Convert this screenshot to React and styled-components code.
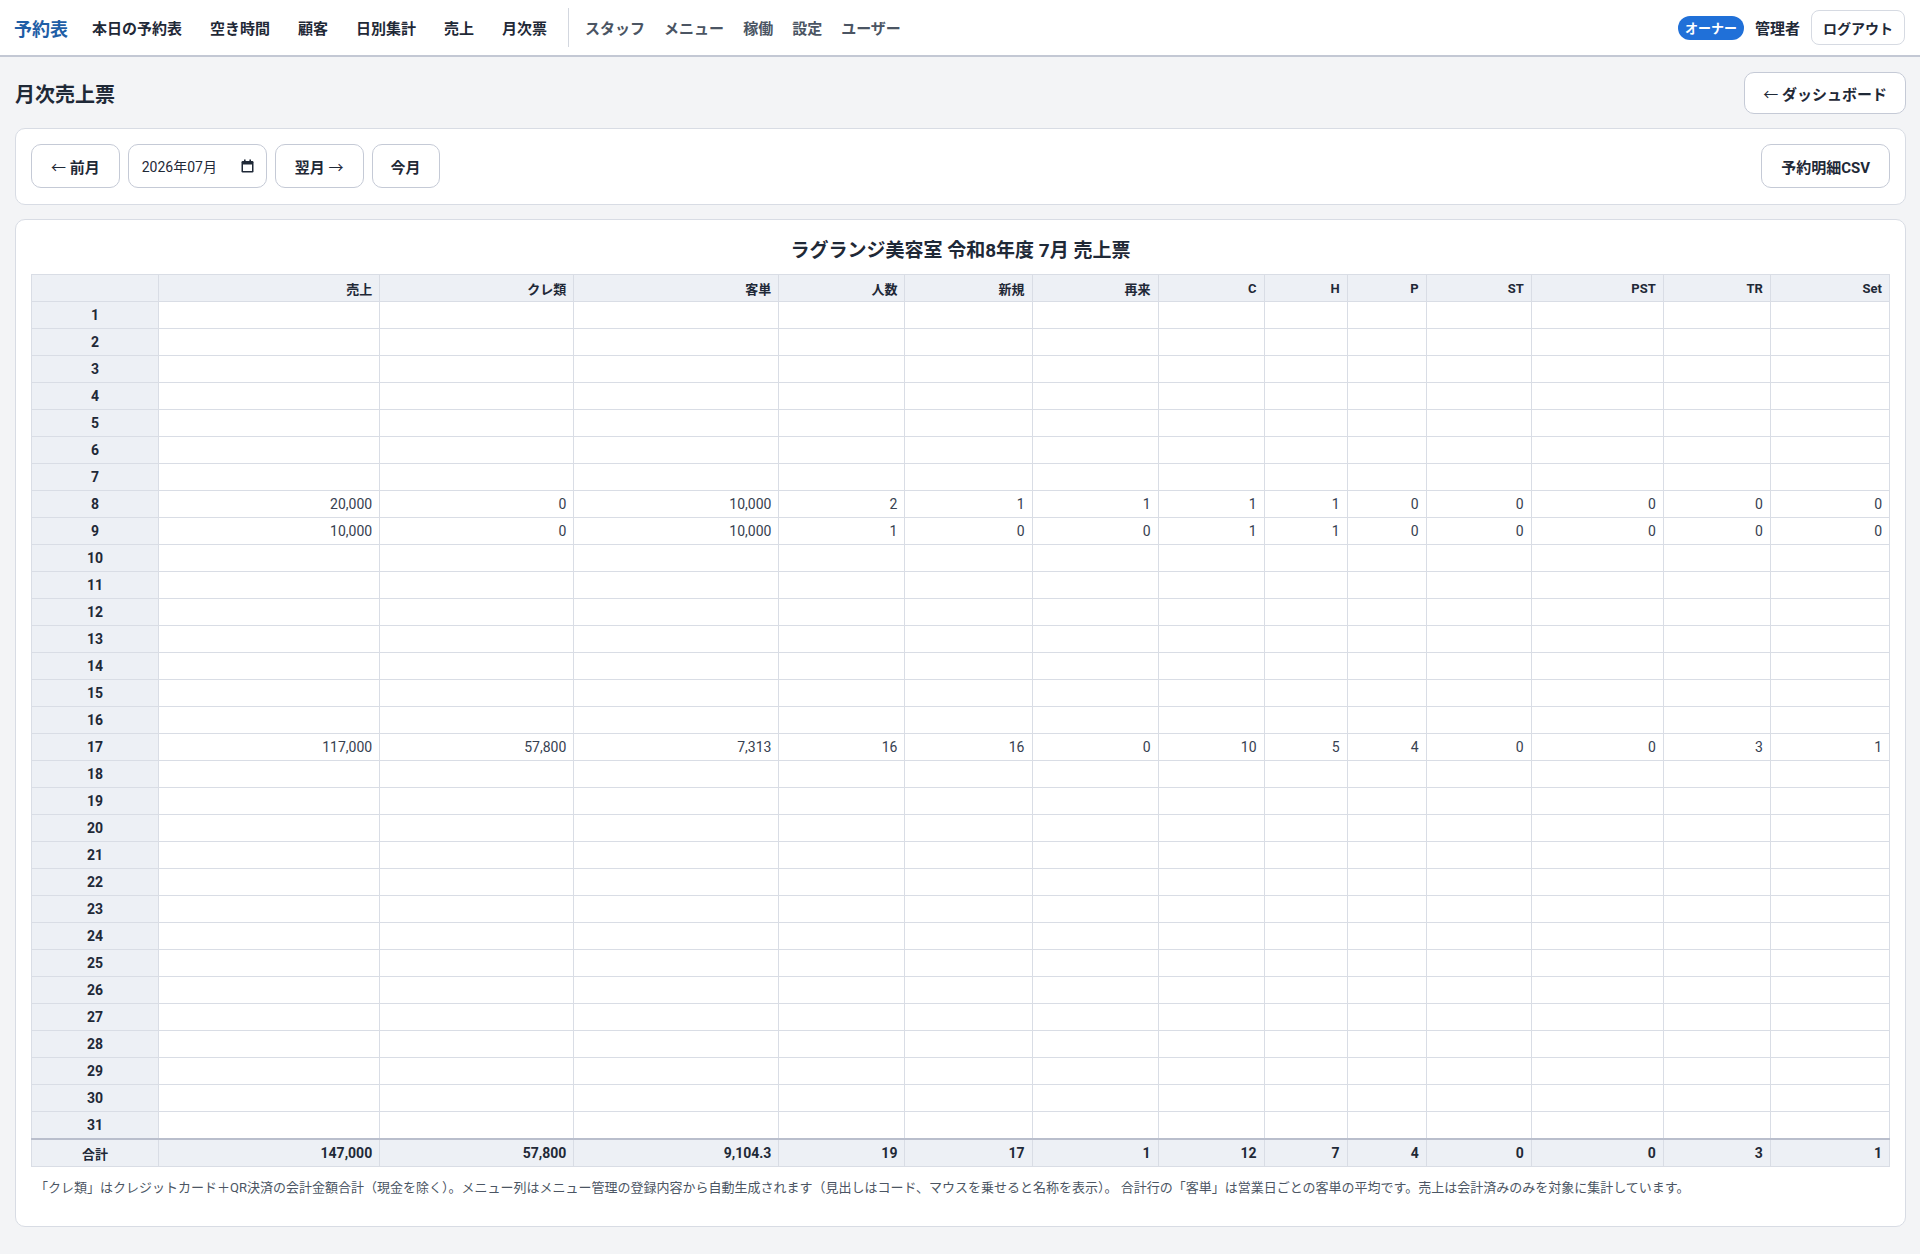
import React from 'react';
import styled, { createGlobalStyle } from 'styled-components';

const GlobalStyle = createGlobalStyle`
  body {
    margin: 0;
    background: #f3f4f6;
    font-family: Roboto, "Noto Sans CJK JP", sans-serif;
    color: #1f2937;
  }
`;

const Nav = styled.nav`
  height: 55px;
  display: flex;
  align-items: center;
  padding: 0 15px 0 14px;
  background: #fff;
  border-bottom: 2px solid #c3c8d4;
`;

const Brand = styled.a`
  font-size: 18px;
  font-weight: 700;
  color: #1f5ea6;
  margin-right: 24px;
  text-decoration: none;
`;

const NavGroup = styled.div`
  display: flex;
  align-items: center;
  gap: ${(p) => p.$gap}px;
`;

const NavLink = styled.a`
  font-size: 15px;
  font-weight: 700;
  color: ${(p) => (p.$muted ? '#4b5563' : '#1f2937')};
  text-decoration: none;
  white-space: nowrap;
`;

const NavDivider = styled.span`
  width: 1px;
  height: 39px;
  background: #d3d7df;
  margin: 0 16px 0 21px;
`;

const NavRight = styled.div`
  margin-left: auto;
  display: flex;
  align-items: center;
  gap: 11px;
`;

const RoleBadge = styled.span`
  height: 24px;
  padding: 0 7px;
  display: inline-flex;
  align-items: center;
  border-radius: 12px;
  background: #2070d8;
  color: #fff;
  font-size: 13px;
  font-weight: 700;
`;

const UserName = styled.span`
  font-size: 15px;
  font-weight: 700;
  color: #1f2937;
`;

const Button = styled.button`
  height: ${(p) => p.$h || 44}px;
  padding: 0 ${(p) => p.$px || 18}px;
  background: #fff;
  border: 1px solid ${(p) => (p.$soft ? '#d6dae2' : '#c5cad6')};
  border-radius: ${(p) => p.$r || 10}px;
  font-family: inherit;
  font-size: ${(p) => p.$fs || 15}px;
  font-weight: 700;
  color: #1f2937;
  cursor: pointer;
  white-space: nowrap;
`;

const Arrow = styled.span`
  font-family: "Noto Sans CJK JP", sans-serif;
  font-weight: 400;
`;

const Page = styled.main`
  padding: 15px 14px 28px 15px;
  display: flex;
  flex-direction: column;
  gap: 14px;
`;

const HeaderRow = styled.div`
  display: flex;
  align-items: center;
  justify-content: space-between;
`;

const PageTitle = styled.h1`
  margin: 0;
  font-size: 20px;
  font-weight: 700;
  color: #1f2937;
`;

const Card = styled.section`
  background: #fff;
  border: 1px solid #d8dce4;
  border-radius: 10px;
  padding: ${(p) => p.$pad};
`;

const Toolbar = styled(Card)`
  display: flex;
  align-items: center;
  gap: 8px;
`;

const DateField = styled.label`
  height: 44px;
  width: 139px;
  box-sizing: border-box;
  padding: 0 12px 0 13px;
  display: flex;
  align-items: center;
  justify-content: space-between;
  border: 1px solid #c5cad6;
  border-radius: 10px;
  font-size: 14px;
  color: #1f2937;
  background: #fff;
`;

const Spacer = styled.div`
  flex: 1;
`;

const SheetTitle = styled.h2`
  margin: 2px 0 9px;
  line-height: 28px;
  text-align: center;
  font-size: 19px;
  font-weight: 700;
  color: #1f2937;
`;

const Table = styled.table`
  width: 100%;
  table-layout: fixed;
  border-collapse: collapse;
  border: 1px solid #d9dde5;
`;

const HeadCell = styled.th`
  height: 26px;
  padding: 0 7px;
  background: #edf0f5;
  border: 1px solid #d9dde5;
  text-align: right;
  font-size: 13px;
  font-weight: 700;
  color: #1f2937;
`;

const DayCell = styled.th`
  height: 26px;
  padding: 0;
  background: #edf0f5;
  border: 1px solid #d9dde5;
  text-align: center;
  font-size: ${(p) => (p.$total ? 13 : 14)}px;
  font-weight: 700;
  color: #1f2937;
`;

const Cell = styled.td`
  height: 26px;
  padding: 0 7px;
  border: 1px solid #d9dde5;
  text-align: right;
  font-size: 14px;
  font-weight: ${(p) => (p.$total ? 700 : 400)};
  color: ${(p) => (p.$total ? '#1f2937' : '#374151')};
  background: ${(p) => (p.$total ? '#edf0f5' : '#fff')};
`;

const TotalRow = styled.tr`
  & > th,
  & > td {
    border-top: 2px solid #b9becc;
  }
`;

const Note = styled.p`
  margin: 0;
  padding: 10px 4px 30px;
  font-size: 13px;
  color: #4b5563;
`;

const CalendarIcon = () => (
  <svg width="13" height="14" viewBox="0 0 13 14">
    <rect x="0.5" y="2" width="12" height="11.5" rx="1.2" fill="#1f2937" />
    <rect x="2" y="5.5" width="9" height="6.5" fill="#fff" />
    <rect x="3" y="0.5" width="1.6" height="2.5" fill="#1f2937" />
    <rect x="8.4" y="0.5" width="1.6" height="2.5" fill="#1f2937" />
  </svg>
);

const widths = [127, 221, 194, 205, 126, 127, 126, 106, 83, 79, 105, 132, 107, 119];
const headers = ['売上', 'クレ類', '客単', '人数', '新規', '再来', 'C', 'H', 'P', 'ST', 'PST', 'TR', 'Set'];

const data = {
  8: ['20,000', '0', '10,000', '2', '1', '1', '1', '1', '0', '0', '0', '0', '0'],
  9: ['10,000', '0', '10,000', '1', '0', '0', '1', '1', '0', '0', '0', '0', '0'],
  17: ['117,000', '57,800', '7,313', '16', '16', '0', '10', '5', '4', '0', '0', '3', '1'],
};
const totals = ['147,000', '57,800', '9,104.3', '19', '17', '1', '12', '7', '4', '0', '0', '3', '1'];

const mainLinks = ['本日の予約表', '空き時間', '顧客', '日別集計', '売上', '月次票'];
const subLinks = ['スタッフ', 'メニュー', '稼働', '設定', 'ユーザー'];

const App = () => {
  const days = Array.from({ length: 31 }, (_, i) => i + 1);

  return (
    <>
      <GlobalStyle />
      <Nav>
        <Brand>予約表</Brand>
        <NavGroup $gap={28}>
          {mainLinks.map((l) => (
            <NavLink key={l}>{l}</NavLink>
          ))}
        </NavGroup>
        <NavDivider />
        <NavGroup $gap={19}>
          {subLinks.map((l) => (
            <NavLink key={l} $muted>
              {l}
            </NavLink>
          ))}
        </NavGroup>
        <NavRight>
          <RoleBadge>オーナー</RoleBadge>
          <UserName>管理者</UserName>
          <Button $h={35} $px={11} $r={8} $fs={14} $soft>
            ログアウト
          </Button>
        </NavRight>
      </Nav>

      <Page>
        <HeaderRow>
          <PageTitle>月次売上票</PageTitle>
          <Button $h={42} $px={18}>
            <Arrow>←</Arrow> ダッシュボード
          </Button>
        </HeaderRow>

        <Toolbar $pad="15px 15px 16px">
          <Button $px={19}>
            <Arrow>←</Arrow> 前月
          </Button>
          <DateField>
            <span>2026年07月</span>
            <CalendarIcon />
          </DateField>
          <Button $px={19}>
            翌月 <Arrow>→</Arrow>
          </Button>
          <Button>今月</Button>
          <Spacer />
          <Button $px={19}>予約明細CSV</Button>
        </Toolbar>

        <Card $pad="15px 15px 0">
          <SheetTitle>ラグランジ美容室 令和8年度 7月 売上票</SheetTitle>
          <Table>
            <colgroup>
              {widths.map((w, i) => (
                <col key={i} style={{ width: w }} />
              ))}
            </colgroup>
            <thead>
              <tr>
                <DayCell />
                {headers.map((h) => (
                  <HeadCell key={h}>{h}</HeadCell>
                ))}
              </tr>
            </thead>
            <tbody>
              {days.map((d) => (
                <tr key={d}>
                  <DayCell>{d}</DayCell>
                  {headers.map((h, i) => (
                    <Cell key={h}>{data[d] ? data[d][i] : ''}</Cell>
                  ))}
                </tr>
              ))}
              <TotalRow>
                <DayCell $total>合計</DayCell>
                {totals.map((v, i) => (
                  <Cell key={i} $total>
                    {v}
                  </Cell>
                ))}
              </TotalRow>
            </tbody>
          </Table>
          <Note>
            「クレ類」はクレジットカード＋QR決済の会計金額合計（現金を除く）。メニュー列はメニュー管理の登録内容から自動生成されます（見出しはコード、マウスを乗せると名称を表示）。
            合計行の「客単」は営業日ごとの客単の平均です。売上は会計済みのみを対象に集計しています。
          </Note>
        </Card>
      </Page>
    </>
  );
};

export default App;
